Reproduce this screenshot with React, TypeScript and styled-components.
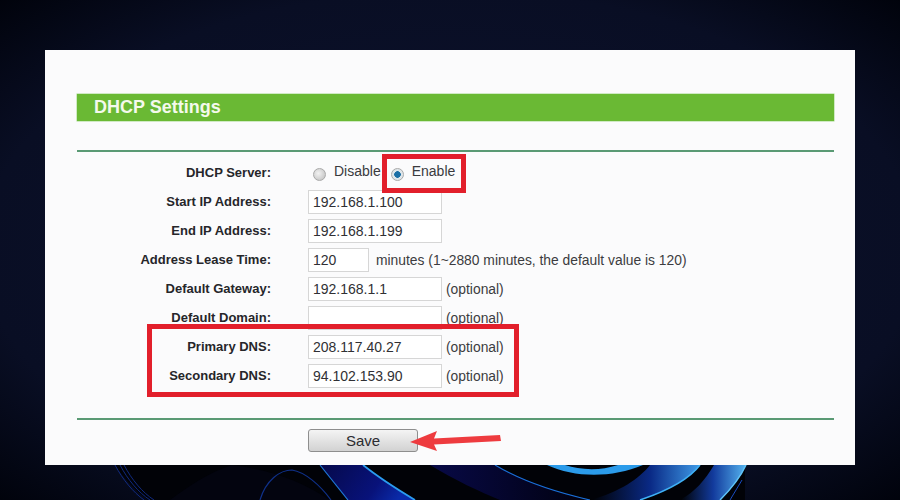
import styled, { createGlobalStyle } from "styled-components";

const GlobalStyle = createGlobalStyle`
  html, body {
    margin: 0;
    width: 900px;
    height: 500px;
    overflow: hidden;
    background: #050815;
  }
`;

type FieldRow = {
  label: string;
  value: string;
  short?: boolean;
  note: string;
};

const fields: FieldRow[] = [
  { label: "Start IP Address:", value: "192.168.1.100", note: "" },
  { label: "End IP Address:", value: "192.168.1.199", note: "" },
  {
    label: "Address Lease Time:",
    value: "120",
    short: true,
    note: "minutes (1~2880 minutes, the default value is 120)",
  },
  { label: "Default Gateway:", value: "192.168.1.1", note: "(optional)" },
  { label: "Default Domain:", value: "", note: "(optional)" },
  { label: "Primary DNS:", value: "208.117.40.27", note: "(optional)" },
  { label: "Secondary DNS:", value: "94.102.153.90", note: "(optional)" },
];

const Wallpaper = () => (
  <WallpaperSvg viewBox="0 0 900 500" aria-hidden="true">
    <defs>
      <linearGradient id="bandA" x1="0" y1="0" x2="1" y2="0.25">
        <stop offset="0" stopColor="#06094a" />
        <stop offset="0.7" stopColor="#08127a" />
        <stop offset="1" stopColor="#0a2aa8" />
      </linearGradient>
      <linearGradient id="bandB" x1="0" y1="0" x2="1" y2="0">
        <stop offset="0" stopColor="#000" />
        <stop offset="0.55" stopColor="#0a2a86" />
        <stop offset="1" stopColor="#3f9be8" />
      </linearGradient>
      <linearGradient id="bandC" x1="0" y1="0" x2="1" y2="0">
        <stop offset="0" stopColor="#000" />
        <stop offset="0.5" stopColor="#123a9c" />
        <stop offset="1" stopColor="#55b4f0" />
      </linearGradient>
      <linearGradient id="bandD" x1="0" y1="0" x2="1" y2="0">
        <stop offset="0" stopColor="#0a0c5c" />
        <stop offset="1" stopColor="#000010" />
      </linearGradient>
      <radialGradient id="sky" cx="0.5" cy="0.5" r="0.72">
        <stop offset="0" stopColor="#0d1330" />
        <stop offset="0.72" stopColor="#090e24" />
        <stop offset="1" stopColor="#00020a" />
      </radialGradient>
    </defs>
    <rect width="900" height="500" fill="url(#sky)" />
    <path d="M115 465 C125 480 135 490 148 500 L745 500 L745 465 Z" fill="#010207" />
    <path d="M232 465 C270 470 300 480 330 500 L170 500 C190 485 210 472 232 465 Z" fill="#03040f" />
    <path d="M320 465 L348 500 L415 500 C395 488 378 477 363 465 Z" fill="url(#bandA)" />
    <path d="M430 465 L495 465 C520 480 555 492 590 500 L500 500 C480 492 455 480 430 465 Z" fill="url(#bandD)" opacity="0.75" />
    <path d="M640 500 C670 490 690 478 700 465 L650 465 C640 478 620 492 590 500 Z" fill="url(#bandB)" />
    <path d="M720 500 C730 490 740 478 746 465 L714 465 C705 480 695 492 680 500 Z" fill="url(#bandC)" />
    <path d="M547 465 C575 478 612 478 643 465 L618 465 C600 471 580 470 565 465 Z" fill="#2b9bea" />
    <path d="M320 465 L348 500" stroke="#1f78d8" strokeWidth="1.2" fill="none" />
    <path d="M363 465 C378 477 395 488 415 500" stroke="#2a9cf0" strokeWidth="1.8" fill="none" />
    <path d="M495 465 C520 480 555 492 590 500" stroke="#1a6fd8" strokeWidth="1.2" fill="none" />
    <path d="M640 500 C670 490 690 478 700 465" stroke="#3fb0f5" strokeWidth="1.5" fill="none" />
    <path d="M720 500 C730 490 740 478 746 465" stroke="#60c4f8" strokeWidth="1.5" fill="none" />
    <path d="M742 480 L730 500" stroke="#1a4cc0" strokeWidth="1" fill="none" />
    <path d="M260 500 C266 480 280 470 292 470 C305 472 320 485 331 500" stroke="#0f3088" strokeWidth="1.2" fill="none" />
    <path d="M115 465 C123 480 133 492 144 500 M120 465 C128 480 138 492 150 500 M124 465 C132 480 142 492 154 500" stroke="#102a80" strokeWidth="1" fill="none" />
  </WallpaperSvg>
);

const SaveArrow = () => (
  <ArrowSvg viewBox="0 0 92 22" aria-hidden="true">
    <path d="M0 12 L27 1 L24 8.5 L90 5 L91 11 L24 14.5 L27 21 Z" fill="#ee3b3f" />
  </ArrowSvg>
);

export default function App() {
  return (
    <Page>
      <GlobalStyle />
      <Wallpaper />
      <Panel>
        <TitleBar>DHCP Settings</TitleBar>
        <Rule />
        <Form>
          <Row>
            <Label>DHCP Server:</Label>
            <RadioGroup>
              <RadioOption>
                <Radio />
                <RadioText>Disable</RadioText>
              </RadioOption>
              <RadioOption>
                <Radio $checked />
                <RadioText>Enable</RadioText>
              </RadioOption>
            </RadioGroup>
          </Row>
          {fields.map((field) => (
            <Row key={field.label}>
              <Label>{field.label}</Label>
              <Value>
                <Input $short={field.short}>{field.value}</Input>
                {field.note && <Note>{field.note}</Note>}
              </Value>
            </Row>
          ))}
          <EnableMark />
          <DnsMark />
        </Form>
        <BottomRule />
        <Actions>
          <SaveButton type="button">Save</SaveButton>
          <SaveArrow />
        </Actions>
      </Panel>
    </Page>
  );
}

const Page = styled.div`
  position: relative;
  width: 900px;
  height: 500px;
  padding: 50px 45px 35px;
  box-sizing: border-box;
  overflow: hidden;
  font-family: "Liberation Sans", Arial, sans-serif;
`;

const WallpaperSvg = styled.svg`
  position: absolute;
  inset: 0;
  width: 900px;
  height: 500px;
`;

const Panel = styled.main`
  position: relative;
  height: 415px;
  box-sizing: border-box;
  padding: 44px 21px 0 32px;
  background: #fbfbfc;
`;

const TitleBar = styled.h1`
  margin: 0;
  height: 27px;
  padding-left: 17px;
  background: #6ab934;
  box-shadow: 0 0 0 0.5px #a6d98c;
  color: #f4f9ec;
  font-size: 18px;
  font-weight: 700;
  line-height: 27px;
`;

const Rule = styled.div`
  height: 2px;
  margin-top: 29px;
  background: #5a9a74;
`;

const Form = styled.div`
  position: relative;
  margin-top: 6px;
`;

const Row = styled.div`
  display: grid;
  grid-template-columns: 194px 1fr;
  column-gap: 37px;
  align-items: center;
  height: 29px;
`;

const Label = styled.div`
  color: #26262a;
  font-size: 13px;
  font-weight: 700;
  text-align: right;
`;

const Value = styled.div`
  display: flex;
  align-items: center;
`;

const Input = styled.div<{ $short?: boolean }>`
  width: ${({ $short }) => ($short ? "61px" : "134px")};
  height: 24px;
  margin-right: ${({ $short }) => ($short ? "7px" : "4px")};
  padding-left: 4px;
  box-sizing: border-box;
  background: #fff;
  border: 1px solid #d6d6d6;
  color: #303034;
  font-size: 14px;
  line-height: 22px;
`;

const Note = styled.span`
  color: #3c3c40;
  font-size: 13.85px;
`;

const RadioGroup = styled.div`
  display: flex;
  gap: 10px;
  padding-left: 5px;
`;

const RadioOption = styled.label`
  display: flex;
  gap: 8px;
  align-items: center;
`;

const Radio = styled.span<{ $checked?: boolean }>`
  width: 13px;
  height: 13px;
  margin-top: 4px;
  border: 1px solid #a9a9a9;
  border-radius: 50%;
  box-sizing: border-box;
  background: ${({ $checked }) =>
    $checked
      ? "radial-gradient(circle, #1c6fa6 0 3px, #dfe6ea 3.6px)"
      : "radial-gradient(circle at 40% 40%, #f2f2f2, #bcbcbc)"};
`;

const RadioText = styled.span`
  margin-bottom: 3px;
  color: #3a3a3e;
  font-size: 14px;
`;

const EnableMark = styled.div`
  position: absolute;
  left: 305px;
  top: -4px;
  width: 84px;
  height: 39px;
  box-sizing: border-box;
  border: 5px solid #e21f2b;
`;

const DnsMark = styled.div`
  position: absolute;
  left: 70px;
  top: 166px;
  width: 372px;
  height: 73px;
  box-sizing: border-box;
  border: 5px solid #e21f2b;
`;

const BottomRule = styled(Rule)`
  margin-top: 28px;
`;

const Actions = styled.div`
  position: relative;
  margin: 9px 0 0 231px;
`;

const SaveButton = styled.button`
  display: block;
  width: 110px;
  height: 23px;
  padding: 0;
  border: 1.5px solid #8e8e8e;
  border-radius: 3px;
  background: linear-gradient(#f4f4f4, #d2d2d2);
  color: #2c2c30;
  font-family: inherit;
  font-size: 15px;
  line-height: 20px;
`;

const ArrowSvg = styled.svg`
  position: absolute;
  left: 102px;
  top: 1px;
  width: 92px;
  height: 22px;
`;
